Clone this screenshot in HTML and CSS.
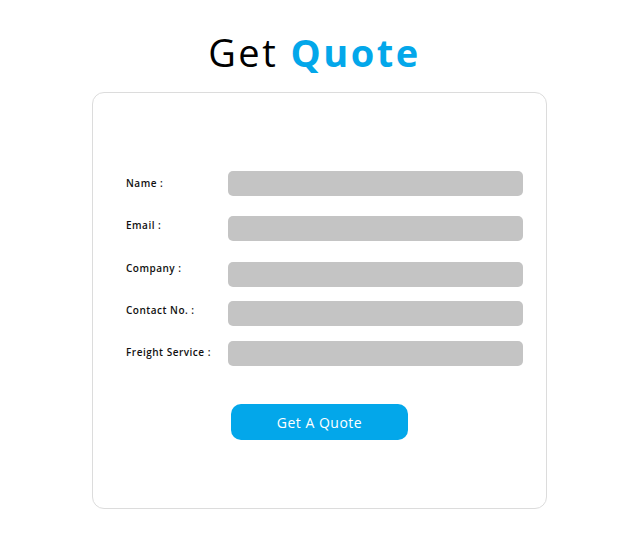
FILE: index.html
```html
<!DOCTYPE html>
<html>
<head>
<meta charset="utf-8">
<link rel="stylesheet" href="styles.css">
</head>
<body>
<div class="page">
  <h1 class="title">Get <span class="accent">Quote</span></h1>
  <div class="card">
    <div class="form">
      <div class="labels">
        <div class="label">Name :</div>
        <div class="label">Email :</div>
        <div class="label">Company :</div>
        <div class="label">Contact No. :</div>
        <div class="label">Freight Service :</div>
      </div>
      <div class="inputs">
        <div class="input"></div>
        <div class="input gap-20"></div>
        <div class="input gap-21"></div>
        <div class="input gap-14"></div>
        <div class="input gap-15"></div>
      </div>
    </div>
    <div class="actions">
      <button class="btn">Get A Quote</button>
    </div>
  </div>
</div>
</body>
</html>
```

FILE: styles.css
```css
* { box-sizing: border-box; }
html, body { margin: 0; padding: 0; background: #fff; }
body { font-family: "Open Sans", "DejaVu Sans", sans-serif; color: #111; }
.page { width: 629px; height: 559px; padding-top: 26px; }
.title {
  margin: 0;
  text-align: center;
  font-weight: 400;
  font-size: 38px;
  line-height: 52px;
  height: 66px;
  letter-spacing: 2.5px;
  color: #000;
}
.accent { color: #03a7ea; font-weight: 700; }
.card {
  margin-left: 92px;
  width: 455px;
  height: 417px;
  border: 1px solid #dcdcdc;
  border-radius: 12px;
  padding: 78px 23px 0 33px;
}
.form { display: flex; }
.labels {
  width: 102px;
  display: flex;
  flex-direction: column;
  padding-top: 4px;
}
.label {
  font-size: 10px;
  font-weight: 600;
  height: 42.25px;
  line-height: 16px;
  letter-spacing: 0.5px;
  white-space: nowrap;
}
.inputs { flex: 1; display: flex; flex-direction: column; }
.input { height: 25px; background: #c4c4c4; border-radius: 5px; }
.gap-20 { margin-top: 20px; }
.gap-21 { margin-top: 21px; }
.gap-14 { margin-top: 14px; }
.gap-15 { margin-top: 15px; }
.actions { padding-top: 18px; padding-left: 105px; }
.btn {
  width: 177px;
  height: 36px;
  border: none;
  border-radius: 10px;
  background: #03a7ea;
  color: #fff;
  font-family: "Open Sans", "DejaVu Sans", sans-serif;
  font-size: 14px;
  font-weight: 400;
  letter-spacing: 0.5px;
  padding: 0;
}
```
